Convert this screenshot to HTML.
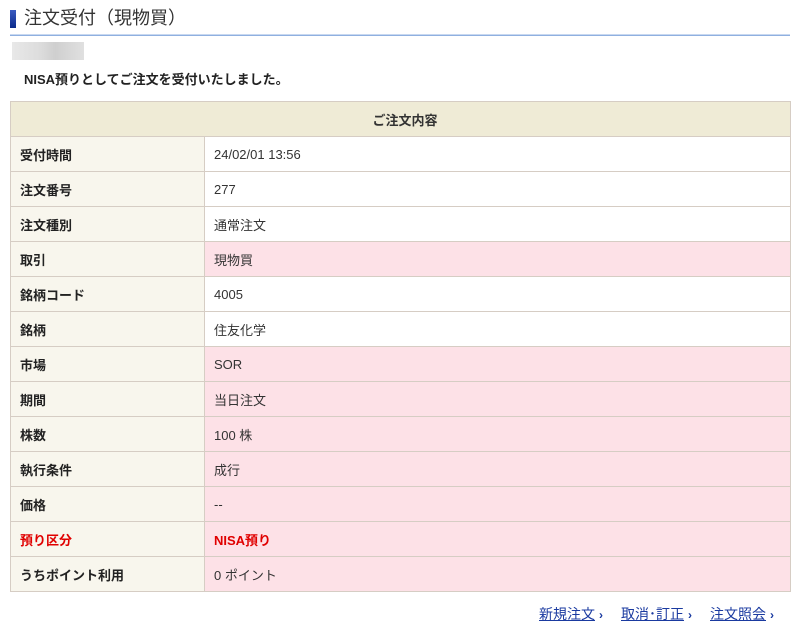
<!DOCTYPE html>
<html><head><meta charset="utf-8"><style>
body{margin:0;background:#fff;font-family:"Liberation Sans","Noto Sans CJK JP",sans-serif;color:#333;width:800px;height:632px;overflow:hidden;position:relative}
.bar{position:absolute;left:10px;top:10px;width:6px;height:18px;background:linear-gradient(#3a5bc0,#0a2a8a)}
h1{position:absolute;left:24px;top:5px;margin:0;font-size:18px;font-weight:normal;color:#333;line-height:26px}
.line{position:absolute;left:10px;top:34px;width:780px;height:1px;background:#c8d8f0;border-bottom:1px solid #8fb0e0}
.blur{position:absolute;left:12px;top:42px;width:72px;height:18px;background:linear-gradient(90deg,#e8e8e8,#dcdcdc 40%,#cfcfcf 60%,#e0e0e0)}
.msg{position:absolute;left:24px;top:69px;font-size:13px;font-weight:bold;color:#222}
table{position:absolute;left:10px;top:101px;width:781px;border-collapse:collapse;font-size:13px}
td,th{border:1px solid #d6cdc4;height:34px;padding:0 0 0 9px;text-align:left}
th{background:#efebd6;text-align:center;font-weight:bold;height:34px}
td.l{background:#f8f6ed;font-weight:bold;width:184px;color:#222}
td.p{background:#fde1e7}
td.red{color:#e00000;font-weight:bold}
.links{position:absolute;top:604px;right:26px;font-size:14px}
.links a{color:#1a3aa0;text-decoration:underline;margin-left:18px}
.links span{color:#1a3aa0;font-size:12px;margin-left:4px;font-weight:bold}
</style></head><body>
<div class="bar"></div><h1>注文受付（現物買）</h1><div class="line"></div>
<div class="blur"></div>
<div class="msg">NISA預りとしてご注文を受付いたしました。</div>
<table>
<tr><th colspan="2">ご注文内容</th></tr>
<tr><td class="l">受付時間</td><td>24/02/01 13:56</td></tr>
<tr><td class="l">注文番号</td><td>277</td></tr>
<tr><td class="l">注文種別</td><td>通常注文</td></tr>
<tr><td class="l">取引</td><td class="p">現物買</td></tr>
<tr><td class="l">銘柄コード</td><td>4005</td></tr>
<tr><td class="l">銘柄</td><td>住友化学</td></tr>
<tr><td class="l">市場</td><td class="p">SOR</td></tr>
<tr><td class="l">期間</td><td class="p">当日注文</td></tr>
<tr><td class="l">株数</td><td class="p">100 株</td></tr>
<tr><td class="l">執行条件</td><td class="p">成行</td></tr>
<tr><td class="l">価格</td><td class="p">--</td></tr>
<tr><td class="l red">預り区分</td><td class="p red">NISA預り</td></tr>
<tr><td class="l">うちポイント利用</td><td class="p">0 ポイント</td></tr>
</table>
<div class="links"><a>新規注文</a><span>›</span><a>取消･訂正</a><span>›</span><a>注文照会</a><span>›</span></div>
</body></html>
